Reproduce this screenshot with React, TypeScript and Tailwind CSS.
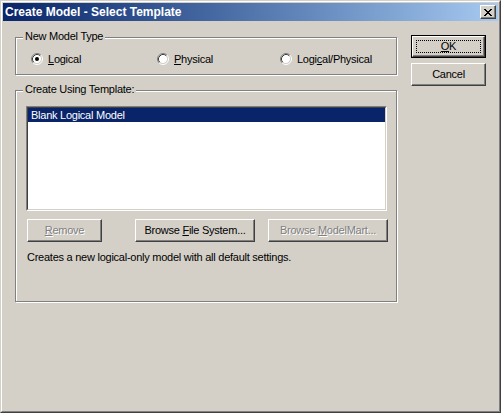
import React from 'react'

const raised =
    'bg-[#d4d0c8] border border-t-white border-l-white border-r-[#404040] border-b-[#404040] shadow-[inset_-1px_-1px_0_#808080]'

const etched = 'relative border border-[#808080] shadow-[1px_1px_0_#ffffff,inset_1px_1px_0_#ffffff]'

function Radio({ checked }: { checked?: boolean }) {
    return (
        <svg width="12" height="12" viewBox="0 0 12 12" className="shrink-0">
            <circle cx="6" cy="6" r="4.5" fill="#ffffff" />
            <path d="M2.11 9.89 A5.5 5.5 0 0 1 9.89 2.11" fill="none" stroke="#808080" strokeWidth="1" />
            <path d="M9.89 2.11 A5.5 5.5 0 0 1 2.11 9.89" fill="none" stroke="#ffffff" strokeWidth="1" />
            <path d="M2.82 9.18 A4.5 4.5 0 0 1 9.18 2.82" fill="none" stroke="#404040" strokeWidth="1" />
            <path d="M9.18 2.82 A4.5 4.5 0 0 1 2.82 9.18" fill="none" stroke="#d4d0c8" strokeWidth="1" />
            {checked && <circle cx="6" cy="6" r="2" fill="#000000" />}
        </svg>
    )
}

function CloseGlyph() {
    // classic 8x7 pixel cross
    const rows = [0, 1, 2, 3, 4, 5, 6]
    return (
        <svg width="8" height="7" viewBox="0 0 8 7" shapeRendering="crispEdges">
            {rows.map((i) => {
                const a = i <= 3 ? i : 6 - i
                return (
                    <g key={i}>
                        <rect x={a} y={i} width="2" height="1" fill="#000" />
                        <rect x={6 - a} y={i} width="2" height="1" fill="#000" />
                    </g>
                )
            })}
        </svg>
    )
}

function GroupLabel({ children }: { children: React.ReactNode }) {
    return (
        <span className="absolute left-[7px] -top-[8px] px-[2px] bg-[#d4d0c8] leading-[13px]">{children}</span>
    )
}

export default function App() {
    return (
        <div className="w-[501px] h-[413px] bg-[#d4d0c8] text-[11px] tracking-[-0.25px] text-black font-['Liberation_Sans',Arial,sans-serif] border border-t-[#d4d0c8] border-l-[#d4d0c8] border-r-[#404040] border-b-[#404040]">
            <div className="h-full p-px border border-t-white border-l-white border-r-[#808080] border-b-[#808080] flex flex-col">
                {/* Title bar */}
                <div className="h-[18px] shrink-0 flex items-center justify-between pl-[2px] pr-[2px] bg-linear-to-r from-[#0a246a] to-[#a6caf0]">
                    <span className="text-white font-bold text-[12px] tracking-normal leading-none">Create Model - Select Template</span>
                    <div className={`w-[16px] h-[14px] flex items-center justify-center ${raised}`}>
                        <CloseGlyph />
                    </div>
                </div>

                {/* Body */}
                <div className="flex items-start pl-[12px]">
                    <div className="w-[382px] mt-[16px]">
                        {/* New Model Type */}
                        <div className={`h-[38px] ${etched}`}>
                            <GroupLabel>New Model Type</GroupLabel>
                            <div className="flex pl-[15px] pt-[15px]">
                                <div className="w-[126px] flex items-center">
                                    <Radio checked />
                                    <span className="ml-[5px] leading-[12px]">
                                        <u>L</u>ogical
                                    </span>
                                </div>
                                <div className="w-[123px] flex items-center">
                                    <Radio />
                                    <span className="ml-[5px] leading-[12px]">
                                        <u>P</u>hysical
                                    </span>
                                </div>
                                <div className="flex items-center">
                                    <Radio />
                                    <span className="ml-[5px] leading-[12px]">
                                        Logi<u>c</u>al/Physical
                                    </span>
                                </div>
                            </div>
                        </div>

                        {/* Create Using Template */}
                        <div className={`h-[212px] mt-[15px] ${etched}`}>
                            <GroupLabel>Create Using Template:</GroupLabel>
                            <div className="ml-[10px] mt-[15px] w-[361px] h-[105px] border border-t-[#808080] border-l-[#808080] border-r-white border-b-white">
                                <div className="h-full bg-white border border-t-[#404040] border-l-[#404040] border-r-[#d4d0c8] border-b-[#d4d0c8]">
                                    <div className="h-[14px] bg-[#0a246a] text-white pl-[3px] leading-[14px]">Blank Logical Model</div>
                                </div>
                            </div>

                            <div className="flex ml-[11px] mt-[8px]">
                                <div className={`w-[75px] h-[23px] flex items-center justify-center text-[#808080] [text-shadow:1px_1px_0_#ffffff] ${raised}`}>
                                    <span>
                                        <u>R</u>emove
                                    </span>
                                </div>
                                <div className={`w-[120px] h-[23px] ml-[33px] flex items-center justify-center ${raised}`}>
                                    <span>
                                        Browse <u>F</u>ile System...
                                    </span>
                                </div>
                                <div className={`w-[120px] h-[23px] ml-[13px] flex items-center justify-center text-[#808080] [text-shadow:1px_1px_0_#ffffff] ${raised}`}>
                                    <span>
                                        Browse <u>M</u>odelMart...
                                    </span>
                                </div>
                            </div>

                            <p className="ml-[11px] mt-[9px] leading-[13px]">
                                Creates a new logical-only model with all default settings.
                            </p>
                        </div>
                    </div>

                    {/* Dialog buttons */}
                    <div className="ml-[14px] mt-[14px] flex flex-col">
                        <div className="w-[75px] h-[23px] border border-black">
                            <div className={`h-full flex items-center justify-center p-[3px] ${raised}`}>
                                <div className="w-full h-full border border-dotted border-black flex items-center justify-center">
                                    <span>
                                        <u>O</u>K
                                    </span>
                                </div>
                            </div>
                        </div>
                        <div className={`w-[75px] h-[23px] mt-[5px] flex items-center justify-center ${raised}`}>
                            Cancel
                        </div>
                    </div>
                </div>
            </div>
        </div>
    )
}
